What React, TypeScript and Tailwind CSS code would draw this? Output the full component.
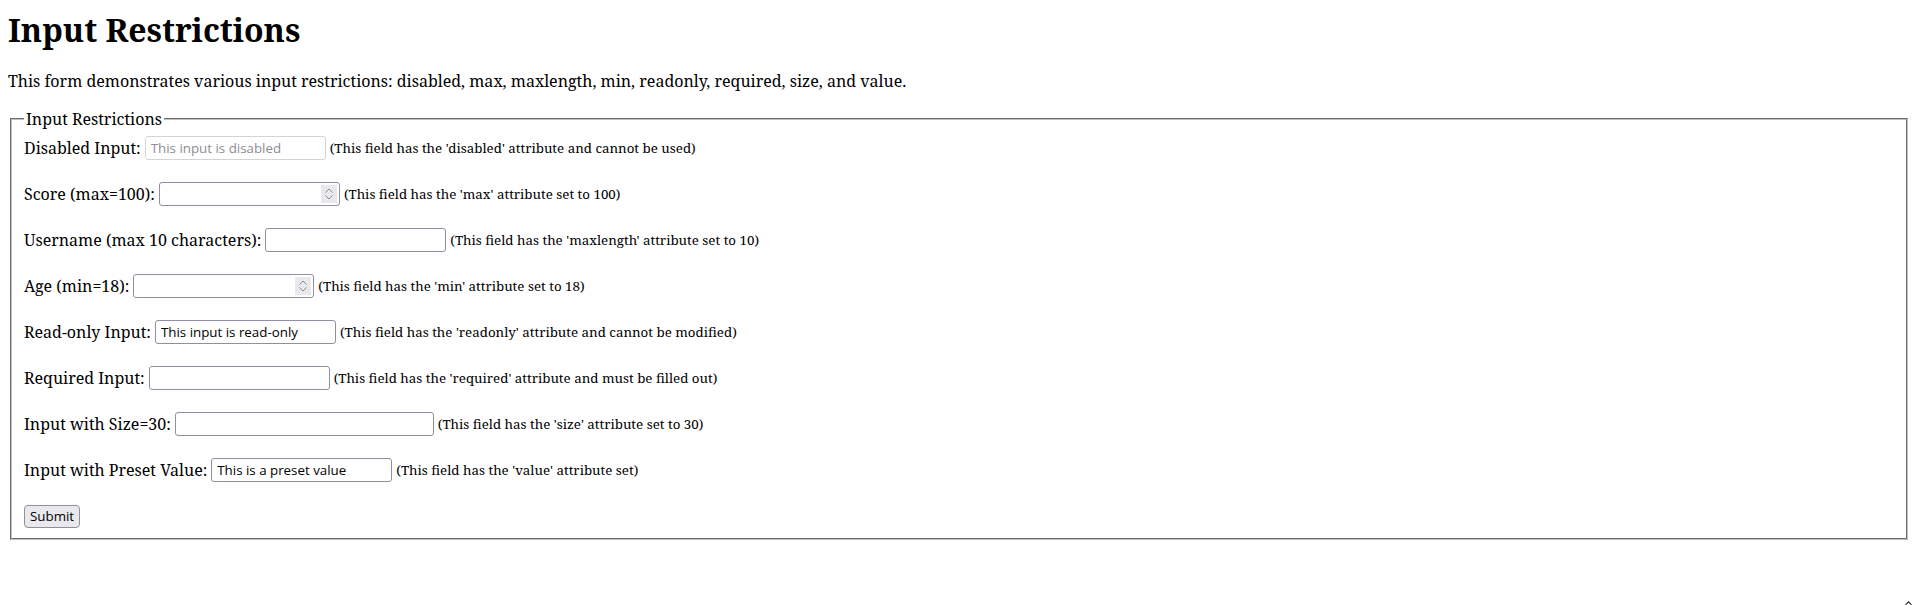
const inputCls =
  "h-[24px] rounded-[3px] border border-[#8f8f9d] bg-white px-[5px] font-['Open_Sans',sans-serif] text-[13.333px] text-black outline-none";

const Hint = ({ children }: { children: string }) => (
  <span className="text-[13.333px]">{children}</span>
);

const NumberField = () => (
  <span className="relative inline-flex">
    <input type="number" className={`${inputCls} w-[181px] pr-[22px] [appearance:textfield]`} />
    <span className="pointer-events-none absolute top-[3px] right-[3px] bottom-[3px] flex w-[16px] flex-col items-center justify-center gap-[2px] bg-[#e9e9ed]">
      <svg width="8" height="5" viewBox="0 0 8 5" fill="none" stroke="#8a8a8f" strokeWidth="1">
        <path d="M0.5 4.5 L4 1 L7.5 4.5" />
      </svg>
      <svg width="8" height="5" viewBox="0 0 8 5" fill="none" stroke="#8a8a8f" strokeWidth="1">
        <path d="M0.5 0.5 L4 4 L7.5 0.5" />
      </svg>
    </span>
  </span>
);

export default function App() {
  return (
    <div className="relative min-h-[605px] p-2 font-['Noto_Serif',serif] text-[16px] leading-[normal] text-black">
      <h1 className="mt-0 mb-[19px] text-[32px] font-bold">Input Restrictions</h1>
      <p className="mb-4">
        This form demonstrates various input restrictions: disabled, max, maxlength, min, readonly,
        required, size, and value.
      </p>

      <form onSubmit={(e) => e.preventDefault()}>
        <fieldset className="mx-[2px] border-2 border-[#c0c0c0] px-3 pt-[6px] pb-[10px] [border-style:groove]">
          <legend className="px-[2px]">Input Restrictions</legend>
          <div className="flex flex-col gap-[22px]">
            <div className="flex h-[24px] items-center gap-1">
              <label>Disabled Input:</label>
              <input
                disabled
                placeholder="This input is disabled"
                className={`${inputCls} w-[181px] border-[#d3d3d9] placeholder:text-[#8d8d93]`}
              />
              <Hint>(This field has the 'disabled' attribute and cannot be used)</Hint>
            </div>

            <div className="flex h-[24px] items-center gap-1">
              <label>Score (max=100):</label>
              <NumberField />
              <Hint>(This field has the 'max' attribute set to 100)</Hint>
            </div>

            <div className="flex h-[24px] items-center gap-1">
              <label>Username (max 10 characters):</label>
              <input maxLength={10} className={`${inputCls} w-[181px]`} />
              <Hint>(This field has the 'maxlength' attribute set to 10)</Hint>
            </div>

            <div className="flex h-[24px] items-center gap-1">
              <label>Age (min=18):</label>
              <NumberField />
              <Hint>(This field has the 'min' attribute set to 18)</Hint>
            </div>

            <div className="flex h-[24px] items-center gap-1">
              <label>Read-only Input:</label>
              <input readOnly value="This input is read-only" className={`${inputCls} w-[181px]`} />
              <Hint>(This field has the 'readonly' attribute and cannot be modified)</Hint>
            </div>

            <div className="flex h-[24px] items-center gap-1">
              <label>Required Input:</label>
              <input required className={`${inputCls} w-[181px]`} />
              <Hint>(This field has the 'required' attribute and must be filled out)</Hint>
            </div>

            <div className="flex h-[24px] items-center gap-1">
              <label>Input with Size=30:</label>
              <input size={30} className={`${inputCls} w-[259px]`} />
              <Hint>(This field has the 'size' attribute set to 30)</Hint>
            </div>

            <div className="flex h-[24px] items-center gap-1">
              <label>Input with Preset Value:</label>
              <input defaultValue="This is a preset value" className={`${inputCls} w-[181px]`} />
              <Hint>(This field has the 'value' attribute set)</Hint>
            </div>

            <div className="flex h-[24px] items-center">
              <button
                type="submit"
                className="h-[23px] rounded-[4px] border border-[#8f8f9d] bg-[#e9e9ed] px-[5px] font-['Open_Sans',sans-serif] text-[13.333px] text-black"
              >
                Submit
              </button>
            </div>
          </div>
        </fieldset>
      </form>

      <svg
        className="absolute right-[6px] bottom-0"
        width="7"
        height="4"
        viewBox="0 0 7 4"
        fill="none"
        stroke="#333"
        strokeWidth="1.2"
      >
        <path d="M0.5 3.8 L3.5 0.8 L6.5 3.8" />
      </svg>
    </div>
  );
}
